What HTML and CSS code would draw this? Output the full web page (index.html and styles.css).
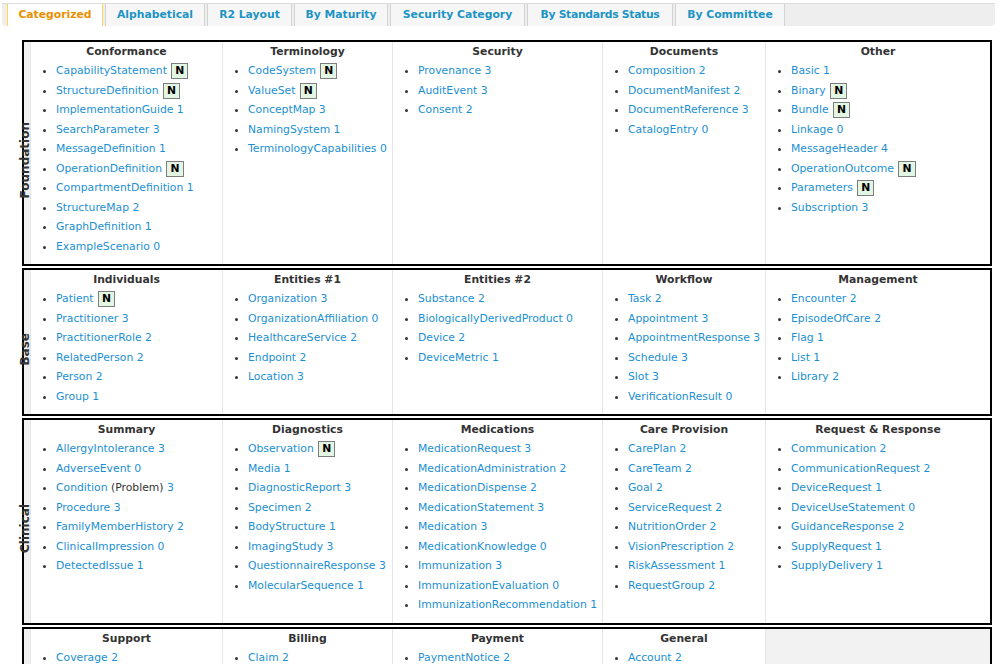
FILE: index.html
```html
<!DOCTYPE html>
<html>
<head>
<meta charset="utf-8">
<link rel="stylesheet" href="styles.css">
</head>
<body>
<div class="tabs">
  <span class="tab t1 active">Categorized</span>
  <span class="tab t2">Alphabetical</span>
  <span class="tab t3">R2 Layout</span>
  <span class="tab t4">By Maturity</span>
  <span class="tab t5">Security Category</span>
  <span class="tab t6">By Standards Status</span>
  <span class="tab t7">By Committee</span>
</div>

<div class="content">
  <div class="section">
    <div class="label"><span>Foundation</span></div>
    <div class="cell">
      <div class="head">Conformance</div>
      <ul>
        <li><a>CapabilityStatement</a> <span class="n">N</span></li>
        <li><a>StructureDefinition</a> <span class="n">N</span></li>
        <li><a>ImplementationGuide 1</a></li>
        <li><a>SearchParameter 3</a></li>
        <li><a>MessageDefinition 1</a></li>
        <li><a>OperationDefinition</a> <span class="n">N</span></li>
        <li><a>CompartmentDefinition 1</a></li>
        <li><a>StructureMap 2</a></li>
        <li><a>GraphDefinition 1</a></li>
        <li><a>ExampleScenario 0</a></li>
      </ul>
    </div>
    <div class="cell">
      <div class="head">Terminology</div>
      <ul>
        <li><a>CodeSystem</a> <span class="n">N</span></li>
        <li><a>ValueSet</a> <span class="n">N</span></li>
        <li><a>ConceptMap 3</a></li>
        <li><a>NamingSystem 1</a></li>
        <li><a>TerminologyCapabilities 0</a></li>
      </ul>
    </div>
    <div class="cell">
      <div class="head">Security</div>
      <ul>
        <li><a>Provenance 3</a></li>
        <li><a>AuditEvent 3</a></li>
        <li><a>Consent 2</a></li>
      </ul>
    </div>
    <div class="cell">
      <div class="head">Documents</div>
      <ul>
        <li><a>Composition 2</a></li>
        <li><a>DocumentManifest 2</a></li>
        <li><a>DocumentReference 3</a></li>
        <li><a>CatalogEntry 0</a></li>
      </ul>
    </div>
    <div class="cell">
      <div class="head">Other</div>
      <ul>
        <li><a>Basic 1</a></li>
        <li><a>Binary</a> <span class="n">N</span></li>
        <li><a>Bundle</a> <span class="n">N</span></li>
        <li><a>Linkage 0</a></li>
        <li><a>MessageHeader 4</a></li>
        <li><a>OperationOutcome</a> <span class="n">N</span></li>
        <li><a>Parameters</a> <span class="n">N</span></li>
        <li><a>Subscription 3</a></li>
      </ul>
    </div>
  </div>

  <div class="section">
    <div class="label"><span>Base</span></div>
    <div class="cell">
      <div class="head">Individuals</div>
      <ul>
        <li><a>Patient</a> <span class="n">N</span></li>
        <li><a>Practitioner 3</a></li>
        <li><a>PractitionerRole 2</a></li>
        <li><a>RelatedPerson 2</a></li>
        <li><a>Person 2</a></li>
        <li><a>Group 1</a></li>
      </ul>
    </div>
    <div class="cell">
      <div class="head">Entities #1</div>
      <ul>
        <li><a>Organization 3</a></li>
        <li><a>OrganizationAffiliation 0</a></li>
        <li><a>HealthcareService 2</a></li>
        <li><a>Endpoint 2</a></li>
        <li><a>Location 3</a></li>
      </ul>
    </div>
    <div class="cell">
      <div class="head">Entities #2</div>
      <ul>
        <li><a>Substance 2</a></li>
        <li><a>BiologicallyDerivedProduct 0</a></li>
        <li><a>Device 2</a></li>
        <li><a>DeviceMetric 1</a></li>
      </ul>
    </div>
    <div class="cell">
      <div class="head">Workflow</div>
      <ul>
        <li><a>Task 2</a></li>
        <li><a>Appointment 3</a></li>
        <li><a>AppointmentResponse 3</a></li>
        <li><a>Schedule 3</a></li>
        <li><a>Slot 3</a></li>
        <li><a>VerificationResult 0</a></li>
      </ul>
    </div>
    <div class="cell">
      <div class="head">Management</div>
      <ul>
        <li><a>Encounter 2</a></li>
        <li><a>EpisodeOfCare 2</a></li>
        <li><a>Flag 1</a></li>
        <li><a>List 1</a></li>
        <li><a>Library 2</a></li>
      </ul>
    </div>
  </div>

  <div class="section">
    <div class="label"><span>Clinical</span></div>
    <div class="cell">
      <div class="head">Summary</div>
      <ul>
        <li><a>AllergyIntolerance 3</a></li>
        <li><a>AdverseEvent 0</a></li>
        <li><a>Condition</a> (Problem) <a>3</a></li>
        <li><a>Procedure 3</a></li>
        <li><a>FamilyMemberHistory 2</a></li>
        <li><a>ClinicalImpression 0</a></li>
        <li><a>DetectedIssue 1</a></li>
      </ul>
    </div>
    <div class="cell">
      <div class="head">Diagnostics</div>
      <ul>
        <li><a>Observation</a> <span class="n">N</span></li>
        <li><a>Media 1</a></li>
        <li><a>DiagnosticReport 3</a></li>
        <li><a>Specimen 2</a></li>
        <li><a>BodyStructure 1</a></li>
        <li><a>ImagingStudy 3</a></li>
        <li><a>QuestionnaireResponse 3</a></li>
        <li><a>MolecularSequence 1</a></li>
      </ul>
    </div>
    <div class="cell">
      <div class="head">Medications</div>
      <ul>
        <li><a>MedicationRequest 3</a></li>
        <li><a>MedicationAdministration 2</a></li>
        <li><a>MedicationDispense 2</a></li>
        <li><a>MedicationStatement 3</a></li>
        <li><a>Medication 3</a></li>
        <li><a>MedicationKnowledge 0</a></li>
        <li><a>Immunization 3</a></li>
        <li><a>ImmunizationEvaluation 0</a></li>
        <li><a>ImmunizationRecommendation 1</a></li>
      </ul>
    </div>
    <div class="cell">
      <div class="head">Care Provision</div>
      <ul>
        <li><a>CarePlan 2</a></li>
        <li><a>CareTeam 2</a></li>
        <li><a>Goal 2</a></li>
        <li><a>ServiceRequest 2</a></li>
        <li><a>NutritionOrder 2</a></li>
        <li><a>VisionPrescription 2</a></li>
        <li><a>RiskAssessment 1</a></li>
        <li><a>RequestGroup 2</a></li>
      </ul>
    </div>
    <div class="cell">
      <div class="head">Request &amp; Response</div>
      <ul>
        <li><a>Communication 2</a></li>
        <li><a>CommunicationRequest 2</a></li>
        <li><a>DeviceRequest 1</a></li>
        <li><a>DeviceUseStatement 0</a></li>
        <li><a>GuidanceResponse 2</a></li>
        <li><a>SupplyRequest 1</a></li>
        <li><a>SupplyDelivery 1</a></li>
      </ul>
    </div>
  </div>

  <div class="section">
    <div class="label"><span>Financial</span></div>
    <div class="cell">
      <div class="head">Support</div>
      <ul>
        <li><a>Coverage 2</a></li>
        <li><a>CoverageEligibilityRequest 2</a></li>
        <li><a>CoverageEligibilityResponse 2</a></li>
        <li><a>EnrollmentRequest 0</a></li>
        <li><a>EnrollmentResponse 0</a></li>
      </ul>
    </div>
    <div class="cell">
      <div class="head">Billing</div>
      <ul>
        <li><a>Claim 2</a></li>
        <li><a>ClaimResponse 2</a></li>
        <li><a>Invoice 0</a></li>
      </ul>
    </div>
    <div class="cell">
      <div class="head">Payment</div>
      <ul>
        <li><a>PaymentNotice 2</a></li>
        <li><a>PaymentReconciliation 2</a></li>
      </ul>
    </div>
    <div class="cell">
      <div class="head">General</div>
      <ul>
        <li><a>Account 2</a></li>
        <li><a>ChargeItem 0</a></li>
        <li><a>ChargeItemDefinition 0</a></li>
        <li><a>Contract 1</a></li>
        <li><a>ExplanationOfBenefit 2</a></li>
        <li><a>InsurancePlan 0</a></li>
      </ul>
    </div>
    <div class="cell empty"></div>
  </div>
</div>
</body>
</html>
```

FILE: styles.css
```css
html, body {
  margin: 0;
  padding: 0;
  background: #fff;
}
body {
  font-family: "DejaVu Sans", Verdana, sans-serif;
  font-size: 10.8px;
  color: #333;
}

.tabs {
  display: flex;
  gap: 2px;
  margin: 3px 9px 0 2px;
  padding-left: 5px;
  height: 22px;
  background: #eeeeee;
  border-top: 1px solid #dcdcdc;
  border-radius: 0 0 4px 4px;
}
.tab {
  box-sizing: border-box;
  display: flex;
  align-items: center;
  justify-content: center;
  padding-bottom: 1px;
  background: #f6f6f6;
  border-left: 1px solid #d3d3d3;
  border-right: 1px solid #d3d3d3;
  color: #1c94c4;
  font-weight: bold;
  font-size: 10.8px;
  white-space: nowrap;
}
.t1 { width: 96px; }
.t2 { width: 100px; }
.t3 { width: 85px; }
.t4 { width: 94px; }
.t5 { width: 135px; }
.t6 { width: 146px; letter-spacing: -0.3px; }
.t7 { width: 110px; }
.tab.active {
  background: #fff;
  color: #eb8f00;
  border-color: #fbd850;
}

.content {
  margin: 14px 0 0 22px;
  width: 970px;
}

.section {
  display: grid;
  grid-template-columns: 6px 192px 170px 210px 163px 225px;
  border: 2px solid #000;
  margin-bottom: 2px;
}

.label {
  background: #f0f0f0;
  display: flex;
  align-items: center;
  justify-content: center;
  padding-top: 14px;
}
.label span {
  writing-mode: vertical-rl;
  transform: rotate(180deg);
  font-weight: bold;
  font-size: 12px;
  color: #333;
  white-space: nowrap;
  line-height: 13px;
  margin-left: -4px;
}

.cell {
  border-left: 1px solid #e6e6e6;
  padding-top: 1px;
  padding-bottom: 8px;
}
.cell.empty {
  background: #f2f2f2;
}
.head {
  text-align: center;
  font-weight: bold;
  line-height: 18px;
}
ul {
  margin: 0;
  padding-left: 25px;
  line-height: 19.5px;
}
li {
  white-space: nowrap;
}
a {
  color: #1b8fd3;
  text-decoration: none;
}
.n {
  display: inline-block;
  margin-left: 1px;
  padding: 0 3px;
  line-height: 14px;
  border: 1px solid #7d7d7d;
  background: #e3f6e3;
  color: #000;
  font-weight: bold;
  vertical-align: 0px;
}
```
